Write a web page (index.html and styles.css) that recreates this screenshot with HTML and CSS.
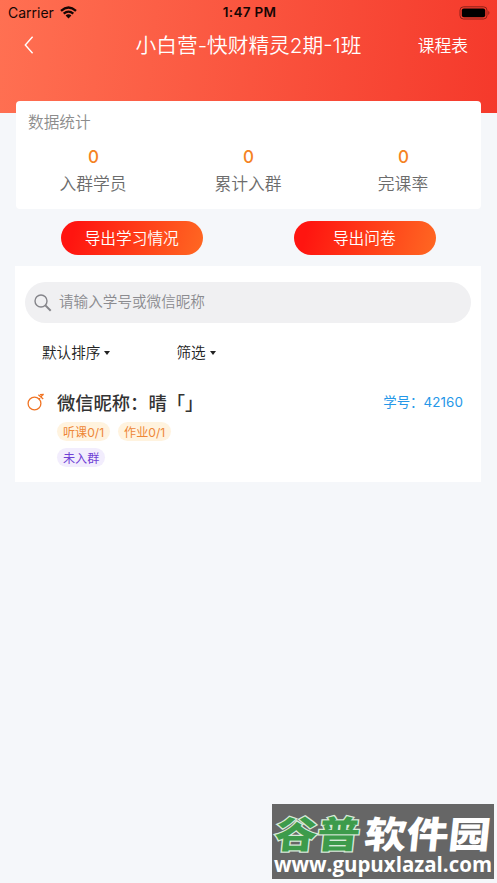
FILE: index.html
```html
<!DOCTYPE html>
<html lang="zh-CN">
<head>
<meta charset="utf-8">
<title>小白营-快财精灵2期-1班</title>
<link rel="stylesheet" href="styles.css">
</head>
<body>
<header class="hero">
  <div class="status">
    <span class="carrier">Carrier
      <svg class="wifi" width="17" height="13" viewBox="0 0 17 13"><g fill="none" stroke="#160604" stroke-width="2.3"><path d="M1 4.8Q8.500-1.700 16 4.800"/><path d="M3.700 7.700Q8.500 3.500 13.300 7.700"/></g><path d="M5.600 9.500Q8.500 7.100 11.400 9.500L8.500 12.400Z" fill="#160604"/></svg>
    </span>
    <span class="clock">1:47 PM</span>
    <svg class="battery" width="32" height="14" viewBox="0 0 32 14"><rect x="1" y=".8" width="27" height="12.200" rx="3.500" fill="none" stroke="#8d2119"/><rect x="2.800" y="2.500" width="23.400" height="8.800" rx="2" fill="#000"/><path d="M29.300 4.800Q31.600 6.900 29.300 9Z" fill="#8d2119"/></svg>
  </div>
  <nav class="nav">
    <svg class="back" width="10" height="18" viewBox="0 0 10 18"><path d="M8.600.8L1.300 9L8.600 17.200" fill="none" stroke="#fff" stroke-width="1.400"/></svg>
    <h1>小白营-快财精灵2期-1班</h1>
    <a class="schedule">课程表</a>
  </nav>
</header>
<main>
  <section class="stats">
    <h2>数据统计</h2>
    <div class="grid">
      <div><b>0</b><span>入群学员</span></div>
      <div><b>0</b><span>累计入群</span></div>
      <div><b>0</b><span>完课率</span></div>
    </div>
  </section>
  <div class="actions">
    <button>导出学习情况</button>
    <button>导出问卷</button>
  </div>
  <section class="list">
    <div class="search">
      <svg width="18" height="18" viewBox="0 0 18 18" fill="none" stroke="#85858a"><circle cx="7" cy="7" r="6" stroke-width="1.400"/><path d="M11.400 11.400L16.700 16.700" stroke-width="2"/></svg>
      <span>请输入学号或微信昵称</span>
    </div>
    <div class="filters">
      <span class="sort">默认排序<i></i></span>
      <span>筛选<i></i></span>
    </div>
    <article class="student">
      <svg class="gender" width="18" height="18" viewBox="0 0 18 18" fill="none" stroke="#f07424" stroke-width="1.300"><circle cx="7.500" cy="10.500" r="6.400"/><path d="M11.600 6.400L16.200 1.400M11.400 1.700L16.200 5.900M13 1.700L16.800 1.500"/></svg>
      <div class="info">
        <div class="line"><strong>微信昵称：晴「」</strong><span class="number">学号：<em>42160</em></span></div>
        <div class="tags"><span>听课0/1</span><span>作业0/1</span></div>
        <div class="tags"><span class="purple">未入群</span></div>
      </div>
    </article>
  </section>
</main>
<aside class="watermark">
  <svg width="222" height="75" viewBox="0 0 222 75">
    <g class="brand" transform="skewX(-6)"><text class="green" x="6" y="44" textLength="85" lengthAdjust="spacingAndGlyphs">谷普</text><text class="white" x="96" y="44" textLength="126" lengthAdjust="spacingAndGlyphs">软件园</text></g>
    <text class="url" x="2" y="68" textLength="218" lengthAdjust="spacingAndGlyphs">www.gupuxlazal.com</text>
  </svg>
</aside>
</body>
</html>
```
FILE: styles.css
```css
* { box-sizing: border-box; }
body {
  margin: 0;
  height: 883px;
  overflow: hidden;
  position: relative;
  background: #f5f7fa;
  font-family: Inter, "Noto Sans CJK SC", sans-serif;
  font-weight: 350;
}
svg { display: block; flex: none; }
.hero {
  height: 113px;
  background: linear-gradient(96deg, #ff7052, #f5392b);
}
.status {
  height: 25px;
  display: grid;
  grid-template-columns: 1fr auto 1fr;
  grid-template-rows: 25px;
  align-items: center;
  padding: 0 6px 0 8px;
  color: #160604;
  font-size: 14px;
  line-height: 25px;
  font-weight: 400;
}
.carrier { display: flex; align-items: center; gap: 6px; }
.clock { font-weight: 600; font-size: 13.5px; letter-spacing: .3px; line-height: 25px; }
.battery { justify-self: end; }
.nav {
  height: 40px;
  display: grid;
  grid-template-columns: 86px 1fr 86px;
  grid-template-rows: 40px;
  align-items: center;
  padding: 0 24px;
  color: #fff;
}
.nav h1 {
  margin: 0;
  padding-top: 1px;
  font-size: 20.7px;
  font-weight: 350;
  line-height: 40px;
  text-align: center;
  white-space: nowrap;
}
.schedule { justify-self: end; font-size: 16.8px; margin-right: 5px; }
main { margin: -12px 16px 0; }
.stats {
  height: 108px;
  background: #fff;
  border-radius: 4px;
  padding: 10px 0 0;
}
.stats h2 {
  margin: 0 0 0 12px;
  font-size: 15.7px;
  line-height: 24px;
  font-weight: 350;
  color: #8c8c8c;
}
.grid { display: grid; grid-template-columns: repeat(3, 1fr); margin-top: 11px; text-align: center; }
.grid b { display: block; font-size: 17px; line-height: 22px; font-weight: 500; color: #f5831f; }
.grid span { display: block; font-size: 16.8px; line-height: 26px; margin: 3px 0 0 -1px; color: #6c6c6c; }
.actions { display: grid; grid-template-columns: 1fr 1fr; justify-items: center; padding: 12px 0 11px; }
.actions button {
  width: 142px;
  height: 34px;
  border: 0;
  padding: 2px 1px 0 0;
  border-radius: 17px;
  color: #fff;
  font: 350 15.7px/32px Inter, "Noto Sans CJK SC", sans-serif;
  background: linear-gradient(105deg, #ff1510 10%, #ff6822);
}
.list { height: 216px; margin-left: -1px; padding: 16px 10px 0; background: #fff; }
.search {
  height: 41px;
  display: flex;
  align-items: center;
  gap: 7px;
  padding-left: 9px;
  border-radius: 21px;
  background: #f0f0f2;
  color: #8b8b8f;
  font-size: 14.6px;
  line-height: 40px;
}
.search span { margin-top: -1px; }
.filters { display: flex; gap: 66px; padding: 19px 0 0 17px; font-size: 14.6px; line-height: 22px; color: #222; }
.filters span { display: flex; align-items: center; gap: 4px; }
.filters i { border: 3px solid transparent; border-top: 4px solid #222; border-bottom: 0; }
.student { display: flex; padding: 26px 8px 0 2px; }
.gender { margin-top: 3px; }
.info { flex: 1; margin-left: 12px; }
.line { display: flex; justify-content: space-between; align-items: center; height: 24px; white-space: nowrap; }
.line strong { font-size: 18.3px; font-weight: 500; color: #333; }
.number { font-size: 13.4px; line-height: 24px; font-weight: 400; color: #2497e8; }
.number em { font-style: normal; letter-spacing: .1px; }
.tags { display: flex; gap: 8px; margin-top: 8px; height: 19px; font-size: 12.1px; line-height: 21px; font-weight: 400; color: #ee8737; }
.tags + .tags { margin-top: 7px; }
.tags span { padding: 0 6px; border-radius: 10px; background: #fff3df; }
.tags .purple { color: #7041d5; background: #f2edfd; }
.watermark { position: absolute; left: 272px; top: 804px; background: #666; }
.watermark svg { overflow: visible; }
.brand { font: 900 37px "Noto Sans CJK SC", sans-serif; }
.green { fill: #3d9b4b; stroke: #d7ead9; stroke-width: 2.5px; paint-order: stroke; }
.white { fill: #fff; }
.url { font: 700 20.5px "Open Sans", sans-serif; fill: #fff; }
```
